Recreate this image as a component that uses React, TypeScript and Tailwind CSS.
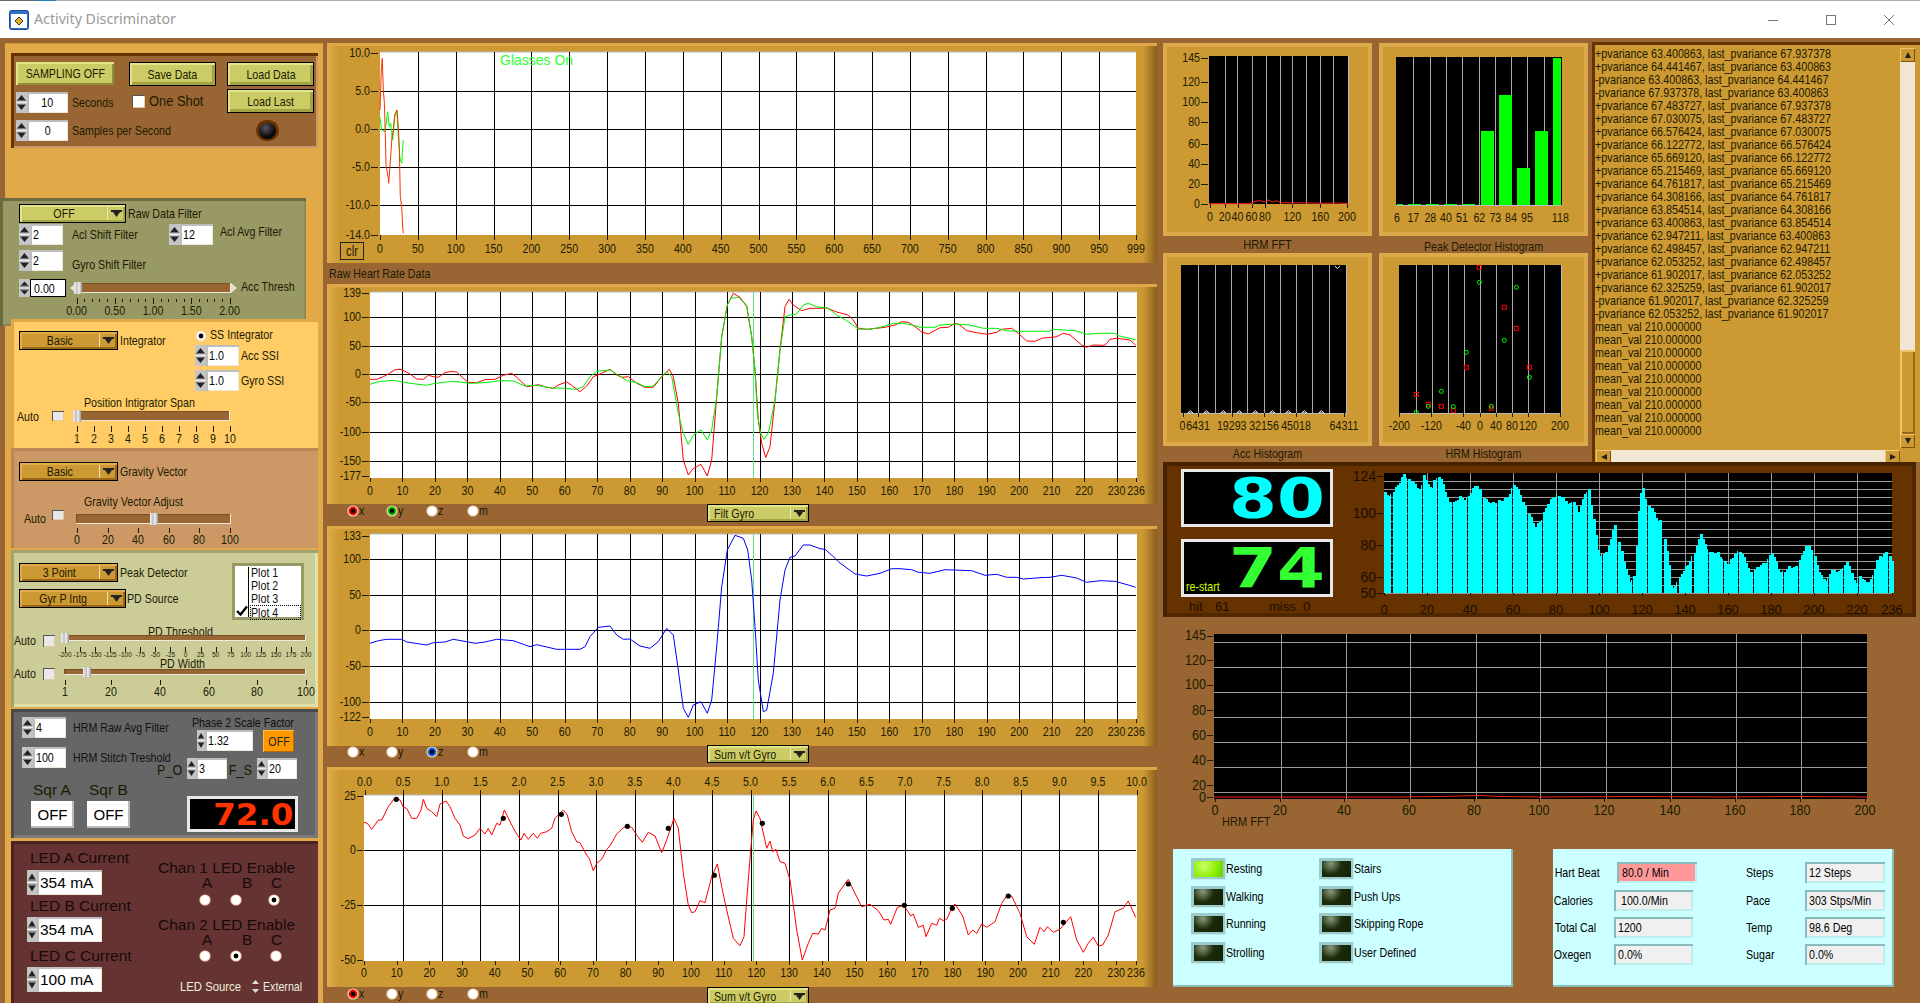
import React from "react";

type P = { className?: string; children?: React.ReactNode };
const INK = "#1c1c00";
const pts = (ox: number, oy: number, a: number[]) => {
  const r: string[] = [];
  for (let i = 0; i < a.length; i += 2) r.push(`${(ox + a[i] / 3).toFixed(1)},${(oy + a[i + 1] / 3).toFixed(1)}`);
  return r.join(" ");
};
const crisp = (n: number) => Math.round(n) + 0.5;

const Txt = ({ className = "", sq = "scale-x-[.82] origin-left", children }: P & { sq?: string }) => <span className={`whitespace-nowrap leading-none text-[13px] text-[#1c1a00] ${sq} ${className}`}>{children}</span>;
const Sq = ({ left = false, children }: { left?: boolean; children?: React.ReactNode }) => <span className={`inline-block whitespace-nowrap scale-x-[.82] ${left ? "origin-left" : "origin-center"}`}>{children}</span>;

const ST = ({ x, y, fs = 13, anchor = "middle", fill = INK, sx = 0.82, children }: { x: number; y: number; fs?: number; anchor?: "start" | "middle" | "end"; fill?: string; sx?: number; children?: React.ReactNode }) => (
  <text transform={`translate(${x} ${y}) scale(${sx} 1)`} fontSize={fs} textAnchor={anchor} dominantBaseline="central" fill={fill}>{children}</text>
);

const Spin = ({ w = 11, tone = "#c4c4c4" }: { w?: number; tone?: string }) => (
  <svg width={w} height="100%" viewBox="0 0 11 21" preserveAspectRatio="none" className="shrink-0 block">
    <rect width="11" height="21" fill={tone} />
    <rect y="10" width="11" height="1" fill="#eee" />
    <polygon points="5.5,3 9.5,8 1.5,8" fill="#222" />
    <polygon points="5.5,18 9.5,13 1.5,13" fill="#222" />
    <rect x="1" y="8" width="9" height="1" fill="#777" />
    <rect x="1" y="12" width="9" height="1" fill="#777" />
  </svg>
);

const Num = ({ className = "", v, spin = 11, text = "text-[13px]", center = false, wide = false, fieldClass = "" }: P & { v: string; spin?: number; text?: string; center?: boolean; wide?: boolean; fieldClass?: string }) => (
  <div className={`flex shrink-0 ${className}`}>
    <Spin w={spin} />
    <div className={`flex-1 min-w-0 flex items-center bg-white shadow-[inset_2px_2px_0_#bdbdbd,inset_-1px_-1px_0_#eee8dc] text-black leading-none ${center ? "justify-center" : "pl-[3px]"} ${text} ${fieldClass}`}>
      {wide ? v : <Sq left={!center}>{v}</Sq>}
    </div>
  </div>
);

const Btn = ({ className = "", children }: P) => (
  <div className={`flex items-center justify-center shrink-0 bg-[#cccc66] text-[13px] text-[#1c1a00] leading-none border border-black shadow-[inset_2px_2px_0_#e4e488,inset_-3px_-3px_0_#a3a344] ${className}`}><Sq>{children}</Sq></div>
);

const Drop = ({ className = "", label, tone = "y", left = false }: P & { label: string; tone?: "y" | "o"; left?: boolean }) => (
  <div className={`flex shrink-0 border border-black text-[13px] leading-none text-[#1c1a00] ${tone === "y" ? "bg-[#cccc66] shadow-[inset_2px_2px_0_#e4e488,inset_-2px_-2px_0_#a3a344]" : "bg-[#cc9933] shadow-[inset_2px_2px_0_#e3ab4b,inset_-2px_-2px_0_#99661a]"} ${className}`}>
    <div className={`flex-1 flex items-center ${left ? "pl-[6px]" : "justify-center"}`}><Sq left={left}>{label}</Sq></div>
    <div className="w-px my-[2px] bg-[#eee8c0]" />
    <div className="w-[17px] flex items-center justify-center">
      <svg width="11" height="7" viewBox="0 0 11 7"><rect width="11" height="2" fill="#222" /><polygon points="2,2 9,2 5.5,7" fill="#222" /></svg>
    </div>
  </div>
);

const Radio = ({ on = false, color = "#ffffff" }: { on?: boolean; color?: string }) => (
  <svg width="12" height="12" viewBox="0 0 12 12" className="shrink-0 block">
    <circle cx="6" cy="6" r="5.6" fill="#f2dcb8" />
    <circle cx="6" cy="6" r="4.4" fill={color} />
    {on && <circle cx="6" cy="6" r="2.4" fill="#000" />}
  </svg>
);

const Check = ({ className = "" }: P) => (
  <div className={`shrink-0 bg-[#e8e8e8] shadow-[inset_1px_1px_0_#555,inset_-1px_-1px_0_#e8c8a0] ${className}`} />
);

const Slider = ({ className = "", thumb = "ml-0", thumbH = "h-[12px] -mt-px" }: P & { thumb?: string; thumbH?: string }) => (
  <div className={`shrink-0 bg-[#996633] shadow-[inset_-1px_-1px_0_#eee8dc,inset_1px_1px_0_#7a4f22] ${className}`}>
    <div className={`w-[8px] bg-[linear-gradient(to_right,#f2f2f2,#bdbdbd_40%,#f2f2f2_60%,#9a9a9a)] ${thumb} ${thumbH}`} />
  </div>
);

const Scale = ({ x0, w, ticks, minor = [], fs = 13, ty = 12, th = 6, h = 20, className = "", color = INK }: { x0: number; w: number; ticks: [number, string][]; minor?: number[]; fs?: number; ty?: number; th?: number; h?: number; className?: string; color?: string }) => (
  <svg width={w} height={h} viewBox={`${x0} 0 ${w} ${h}`} className={`block shrink-0 overflow-visible ${className}`}>
    {minor.map((m) => <line key={m} x1={crisp(m)} x2={crisp(m)} y1="1" y2="4" stroke={color} shapeRendering="crispEdges" />)}
    {ticks.map(([x, t]) => (
      <g key={t}>
        <line x1={crisp(x)} x2={crisp(x)} y1="0" y2={th} stroke={color} shapeRendering="crispEdges" />
        <ST x={x} y={ty + th - 6} fs={fs} fill={color}>{t}</ST>
      </g>
    ))}
  </svg>
);

const Seg = ({ className = "", children }: P) => <span className={`[font-family:'DejaVu_Sans',sans-serif] font-bold origin-right block ${className}`}>{children}</span>;

/* ---------- charts ---------- */
const Grid = ({ xs, ys, x0, x1, y0, y1, color = "#000" }: { xs: number[]; ys: number[]; x0: number; x1: number; y0: number; y1: number; color?: string }) => (
  <g shapeRendering="crispEdges" stroke={color}>
    {xs.map((x, i) => <line key={"v" + i} x1={crisp(x)} x2={crisp(x)} y1={y0} y2={y1} />)}
    {ys.map((y, i) => <line key={"h" + i} x1={x0} x2={x1} y1={crisp(y)} y2={crisp(y)} />)}
  </g>
);
const YAxis = ({ items, x, len = 7, fs = 13, color = INK, sx = 0.82 }: { items: [number, string][]; x: number; len?: number; fs?: number; color?: string; sx?: number }) => (
  <g>
    {items.map(([y, t]) => (
      <g key={t}>
        <line x1={x - len} x2={x} y1={crisp(y)} y2={crisp(y)} stroke={color} shapeRendering="crispEdges" />
        <ST x={x - len - 1} y={y} fs={fs} anchor="end" fill={color} sx={sx}>{t}</ST>
      </g>
    ))}
  </g>
);
const XAxis = ({ items, y, tickY, len = 5, fs = 13, color = INK, sx = 0.82 }: { items: [number, string][]; y: number; tickY: number; len?: number; fs?: number; color?: string; sx?: number }) => (
  <g>
    {items.map(([x, t], i) => (
      <g key={i}>
        <line x1={crisp(x)} x2={crisp(x)} y1={tickY} y2={tickY + len} stroke={color} shapeRendering="crispEdges" />
        <ST x={x} y={y} fs={fs} fill={color} sx={sx}>{t}</ST>
      </g>
    ))}
  </g>
);

const Panel = ({ top, children }: { top: number; children: React.ReactNode }) => (
  <div className="w-[830px] h-[220px] shrink-0 bg-[linear-gradient(to_right,#e3ab4b,#cc9933_12px,#cc9933_816px,#8a5f1f)]">
    <svg width="830" height="220" viewBox={`327 ${top} 830 220`} className="block">
      <rect x="327" y={top} width="830" height="3" fill="#e0a848" />
      {children}
    </svg>
  </div>
);

const range = (a: number, b: number, s: number) => { const r: number[] = []; for (let i = a; i <= b; i += s) r.push(i); return r; };
const X2 = (v: number) => 370 + 3.246 * v;
const X4 = (v: number) => 364 + 3.27 * v;
const x2Ticks: [number, string][] = [...range(0, 230, 10).map((v) => [X2(v), String(v)] as [number, string]), [X2(236), "236"]];
const x2Lines = range(10, 230, 10).map(X2);

const Red2a = [150,1048,170,1048,190,1040,205,1032,225,1019,240,1018,255,1024,270,1032,290,1047,310,1048,325,1036,340,1040,355,1042,375,1028,395,1024,410,1026,430,1045,445,1057,470,1058,495,1049,525,1048,550,1036,575,1030,590,1042,620,1070,655,1064,680,1072,700,1075,715,1065,740,1056,755,1066,780,1085,800,1068,820,1040,845,1030,870,1018,890,1035,905,1042,925,1040,950,1060,975,1072,1000,1072,1025,1040,1048,1018,1060,1040,1075,1120,1090,1290,1105,1335,1118,1317,1143,1303,1162,1338,1175,1290,1190,1100,1205,920,1222,825,1240,790,1260,802,1280,830,1295,920,1305,1020,1315,1170,1325,1240,1337,1283,1350,1250,1365,1110,1380,960,1395,830,1407,808,1420,825,1445,842,1470,835,1500,835];
const Red2b = [140,114,170,126,205,135,220,150,235,175,260,178,290,175,315,172,345,165,365,155,385,157,405,170,425,186,445,192,480,173,505,172,525,160,540,165,560,182,590,188,620,193,650,187,665,178,695,175,715,190,740,213,765,214,785,205,830,200,850,190,870,195,905,225,920,232,940,225,975,226,990,208,1010,205,1050,210,1067,226];
const Grn2a = [150,1063,175,1055,220,1051,270,1060,320,1066,345,1060,400,1054,450,1060,495,1058,540,1052,580,1053,615,1068,650,1066,700,1075,720,1074,770,1078,790,1070,810,1040,830,1024,870,1020,890,1032,920,1052,950,1058,975,1070,1000,1068,1025,1040,1040,1025,1055,1040,1075,1150,1090,1210,1105,1243,1120,1215,1143,1200,1162,1230,1175,1200,1190,1100,1205,920,1222,825,1232,805,1255,802,1280,825,1295,920,1305,1020,1312,1150,1322,1210,1332,1228,1345,1210,1365,1110,1380,960,1395,860,1410,855,1430,852,1450,825,1465,820,1490,830,1500,832];
const Grn2b = [145,115,170,135,200,152,235,177,270,178,300,172,340,160,370,160,400,166,420,172,465,172,480,165,530,162,570,165,610,175,650,175,680,182,715,184,740,184,810,184,820,178,850,180,885,182,920,193,960,190,1005,190,1015,197,1067,209];
const Blu3a = [150,370,175,362,200,358,245,358,260,366,320,375,340,368,375,366,400,358,440,365,465,370,495,366,530,358,580,362,630,380,650,374,710,388,780,388,795,380,810,350,835,322,870,318,890,345,910,358,930,357,960,378,990,385,1015,365,1040,325,1060,345,1075,450,1090,565,1105,592,1120,555,1143,545,1162,580,1175,540,1190,380,1205,200,1222,90,1245,46,1270,55,1283,90,1295,180,1305,320,1315,480,1330,575,1340,570,1360,460,1380,240,1395,150,1410,112,1425,108,1450,75,1470,75,1500,86];
const Blu3b = [135,838,155,855,175,875,225,912,260,918,300,910,335,896,360,896,395,899,415,907,450,910,495,899,575,902,615,916,650,913,680,922,710,922,730,927,780,923,810,922,845,916,890,924,920,937,960,932,1005,934,1045,945,1067,952];
const Red4a = [132,277,142,280,155,298,175,270,185,270,205,230,225,203,240,210,250,232,260,235,275,265,290,265,303,240,310,208,320,235,335,245,350,260,360,222,378,213,390,230,405,265,420,285,430,318,445,326,465,315,480,295,495,312,505,295,515,315,530,280,540,285,553,240,575,285,590,312,603,330,612,310,625,328,640,310,652,325,662,310,680,305,695,295,705,265,730,240,742,255,755,305,770,335,780,338,800,375,808,385,820,422,830,400,845,388,860,358,870,348,890,312,905,298,915,290,935,292,950,315,967,337,985,307,1005,318,1025,368,1040,330,1062,265,1075,295,1090,430,1105,525,1115,548,1125,545,1140,512,1155,518,1175,440,1192,402,1205,470,1220,540,1240,625,1260,647,1272,620,1280,510,1290,385,1300,270,1308,243,1320,265,1340,355,1350,333,1358,365,1368,358,1380,395,1395,400,1410,450,1430,600,1447,690,1465,640,1478,610,1495,612,1500,603];
const Red4b = [125,805,135,810,150,750,165,745,175,700,190,678,205,658,220,690,245,740,270,733,295,752,312,780,325,778,332,793,352,742,372,736,392,768,400,762,415,802,430,796,438,830,455,790,470,796,478,775,490,782,500,778,515,745,525,732,548,768,565,825,578,810,590,820,605,792,620,802,645,785,665,730,680,707,695,708,720,760,740,830,763,853,780,802,792,815,802,800,820,817,840,808,872,770,890,840,910,877,925,850,940,832,955,858,968,855,985,825,1005,755,1030,745,1045,723,1067,772];
const Dots4a = [229,208,550,265,724,253,922,289,1045,295,1183,436,1327,280];
const Dots4b = [205,672,373,736,517,745,685,708,850,787];

const Chart1 = () => {
  const X = (v: number) => 380 + 0.757 * v;
  const ticks: [number, string][] = [...range(0, 950, 50).map((v) => [X(v), String(v)] as [number, string]), [1136, "999"]];
  return (
    <Panel top={43}>
      <rect x="380" y="52" width="756" height="183" fill="#fff" />
      <line x1="380" x2="1136" y1="52" y2="52" stroke="#b8b8c0" />
      <Grid xs={range(50, 950, 50).map(X)} ys={[90.6, 128.6, 166.6, 204.6]} x0={380} x1={1136} y0={52} y1={235} />
      <polyline fill="none" stroke="#00ff00" points={pts(320, 30, [180,262,185,300,195,305,203,245,208,290,212,280,218,330,224,260,230,240,236,340,240,385,245,400,250,330])} />
      <polyline fill="none" stroke="#ff3300" points={pts(320, 30, [180,240,184,120,187,85,190,180,193,215,196,310,198,405,204,440,206,460,209,420,213,365,216,320,220,300,224,255,231,240,235,290,238,350,241,500,245,530,248,590,250,610])} />
      <text x="500" y="60" fontSize="14" fill="#33ff33" dominantBaseline="central">Glasses On</text>
      <YAxis x={378} len={7} items={[[52.6, "10.0"], [90.6, "5.0"], [128.6, "0.0"], [166.6, "-5.0"], [204.6, "-10.0"], [234.6, "-14.0"]]} />
      <XAxis y={249} tickY={235} items={ticks} />
      <rect x="340.5" y="242.5" width="23" height="17" fill="#cc9933" stroke="#222" />
      <ST x={352} y={251} fs={14}>clr</ST>
    </Panel>
  );
};
const Chart2 = () => (
  <Panel top={284}>
    <rect x="370" y="292" width="767" height="186" fill="#fff" />
    <line x1="370" x2="1137" y1="292" y2="292" stroke="#b8b8c0" />
    <Grid xs={x2Lines} ys={[316.6, 345.5, 373.5, 402, 431.5, 460.5]} x0={370} x1={1136} y0={292} y1={478} />
    <line x1="753.5" x2="753.5" y1="292" y2="478" stroke="#66dd88" />
    <polyline fill="none" stroke="#ff0000" points={pts(320, 30, Red2a) + " " + pts(780, 270, Red2b)} />
    <polyline fill="none" stroke="#00ee00" points={pts(320, 30, Grn2a) + " " + pts(780, 270, Grn2b)} />
    <YAxis x={369} items={[[293, "139"], [316.6, "100"], [345.5, "50"], [373.5, "0"], [402, "-50"], [431.5, "-100"], [460.5, "-150"], [476, "-177"]]} />
    <XAxis y={491} tickY={478} len={4} items={x2Ticks} />
  </Panel>
);
const Chart3 = () => (
  <Panel top={526}>
    <rect x="370" y="534" width="767" height="185" fill="#fff" />
    <line x1="370" x2="1137" y1="534" y2="534" stroke="#b8b8c0" />
    <Grid xs={x2Lines} ys={[559, 595, 630, 666, 702]} x0={370} x1={1136} y0={534} y1={719} />
    <line x1="753.5" x2="753.5" y1="534" y2="719" stroke="#66dd88" />
    <polyline fill="none" stroke="#0000ff" points={pts(320, 520, Blu3a) + " " + pts(780, 270, Blu3b)} />
    <YAxis x={369} items={[[535.5, "133"], [559, "100"], [595, "50"], [630, "0"], [666, "-50"], [702, "-100"], [717, "-122"]]} />
    <XAxis y={732} tickY={719} len={4} items={x2Ticks} />
  </Panel>
);
const Chart4 = () => {
  const T = (v: number) => 364.5 + 77.2 * v;
  const top: [number, string][] = range(0, 20, 1).map((i) => [T(i / 2), (i / 2).toFixed(1)] as [number, string]);
  const bot: [number, string][] = [...range(0, 230, 10).map((v) => [X4(v), String(v)] as [number, string]), [1136, "236"]];
  const d: number[][] = [];
  for (let i = 0; i < Dots4a.length; i += 2) d.push([320 + Dots4a[i] / 3, 730 + Dots4a[i + 1] / 3]);
  for (let i = 0; i < Dots4b.length; i += 2) d.push([780 + Dots4b[i] / 3, 660 + Dots4b[i + 1] / 3]);
  return (
    <Panel top={767}>
      <rect x="364" y="795" width="773" height="166" fill="#fff" />
      <line x1="364" x2="1137" y1="795" y2="795" stroke="#b8b8c0" />
      <Grid xs={range(1, 19, 1).map((i) => T(i / 2))} ys={[850, 905]} x0={364} x1={1136} y0={795} y1={961} />
      <line x1="753.5" x2="753.5" y1="795" y2="961" stroke="#66dd88" />
      <polyline fill="none" stroke="#ff0000" points={pts(320, 730, Red4a) + " " + pts(780, 660, Red4b)} />
      {d.map((p, i) => <circle key={i} cx={p[0]} cy={p[1]} r="2.6" fill="#000" />)}
      <YAxis x={363} len={6} items={[[795.7, "25"], [850, "0"], [905, "-25"], [960, "-50"]]} />
      <XAxis y={782} tickY={790} items={top} />
      <XAxis y={973} tickY={961} len={4} items={bot} />
    </Panel>
  );
};

const Legend = ({ active, dropLabel, className = "" }: { active: Record<string, string>; dropLabel: string; className?: string }) => (
  <div className={`flex items-start ${className}`}>
    <div className="ml-[20px] flex">
      {["x", "y", "z", "m"].map((l, i) => (
        <div key={l} className={`flex pt-px ${i === 0 ? "w-[39px]" : i === 1 ? "w-[40px]" : i === 2 ? "w-[41px]" : "w-[40px]"}`}>
          <Radio on={!!active[l]} color={active[l] || "#ffffff"} />
          <Txt className="-mt-px">{l}</Txt>
        </div>
      ))}
    </div>
    <Drop className="ml-[200px] w-[102px] h-[18px]" label={dropLabel} left />
  </div>
);

/* ---------- histogram panels ---------- */
const Hist = ({ x, y, children }: { x: number; y: number; children: React.ReactNode }) => (
  <div className="w-[209px] h-[193px] shrink-0 bg-[#cc9933] shadow-[inset_4px_4px_0_#dcaa4a,inset_-4px_-4px_0_#dcaa4a]">
    <svg width="209" height="193" viewBox={`${x} ${y} 209 193`} className="block">{children}</svg>
  </div>
);
const z5x = (v: number) => 1150 + v / 3;
const z5y = (v: number) => 30 + v / 3;
const HistFFT = () => (
  <Hist x={1163} y={43}>
    <rect x="1209" y="56" width="139" height="148" fill="#000" />
    <line x1="1348.5" x2="1348.5" y1="56" y2="204" stroke="#bbb" />
    <Grid xs={[224, 262, 305, 347, 389, 427, 469, 511, 550].map(z5x)} ys={[]} x0={0} x1={0} y0={56} y1={204} color="#aaaaaa" />
    <polyline fill="none" stroke="#ff2222" points={pts(1150, 30, [178,521,300,521,315,514,330,512,345,516,356,510,368,516,380,512,390,518,485,519,520,520,560,519,595,521])} />
    <YAxis x={1208} len={7} items={[[57.5, "145"], [82, "120"], [102, "100"], [122, "80"], [143.5, "60"], [163.5, "40"], [183.5, "20"], [203.5, "0"]]} />
    <XAxis y={217} tickY={204} len={4} items={[[1210, "0"], [1224.7, "20"], [1237.5, "40"], [1251.5, "60"], [1265, "80"], [1292.3, "120"], [1320.3, "160"], [1347, "200"]]} />
  </Hist>
);
const HistPeak = () => (
  <Hist x={1379} y={43}>
    <rect x="1396" y="57" width="166" height="148" fill="#000" />
    <Grid xs={[790, 841, 889, 937, 988, 1036, 1084, 1132, 1183].map(z5x)} ys={[]} x0={0} x1={0} y0={57} y1={205} color="#aaaaaa" />
    <g fill="#00ff00" shapeRendering="crispEdges">
      <rect x="1481" y="131" width="13" height="74" />
      <rect x="1499" y="95" width="13" height="110" />
      <rect x="1517" y="168" width="13" height="37" />
      <rect x="1535" y="131" width="13" height="74" />
      <rect x="1553" y="58" width="8" height="147" />
      <rect x="1397" y="204" width="6" height="1" />
      <rect x="1408" y="204" width="13" height="1" />
      <rect x="1426" y="204" width="13" height="1" />
      <rect x="1444" y="204" width="13" height="1" />
      <rect x="1462" y="204" width="13" height="1" />
    </g>
    <line x1="1396" x2="1562" y1="205.5" y2="205.5" stroke="#bbb" />
    <XAxis y={218} tickY={205} len={0} items={[[741, "6"], [790, "17"], [841, "28"], [888, "40"], [936, "51"], [988, "62"], [1036, "73"], [1083, "84"], [1131, "95"], [1231, "118"]].map(([a, b]) => [z5x(a as number), b] as [number, string])} />
  </Hist>
);
const HistAcc = () => (
  <Hist x={1163} y={253}>
    <rect x="1181" y="265" width="166" height="148" fill="#000" />
    <Grid xs={[145, 196, 244, 292, 343, 391, 439, 487, 538].map(z5x)} ys={[]} x0={0} x1={0} y0={265} y1={413} color="#aaaaaa" />
    {[121, 169, 220, 268, 316, 367, 415, 463, 514].map((v) => <polygon key={v} points={`${z5x(v) - 2.5},413 ${z5x(v)},410.5 ${z5x(v) + 2.5},413`} fill="none" stroke="#fff" />)}
    <polyline points={`${z5x(562) - 2.5},266 ${z5x(562)},268.5 ${z5x(562) + 2.5},266`} fill="none" stroke="#fff" />
    <line x1="1346.5" x2="1346.5" y1="265" y2="413" stroke="#bbb" />
    <line x1="1181" x2="1347" y1="413.5" y2="413.5" stroke="#bbb" />
    <XAxis y={426} tickY={413} len={4} items={[[1182.5, "0"], [1198, "6431"], [1231.7, "19293"], [1264, "32156"], [1296, "45018"], [1344, "64311"]]} />
  </Hist>
);
const HistHRM = () => {
  const red = [988,712,1063,832,1099,895,949,1012,1138,1012,799,1093,835,1123,874,1129,910,1141,1024,1135];
  const grn = [988,757,1099,772,1063,931,949,967,1138,1042,874,1084,835,1129,910,1130,1024,1129,799,1147];
  const r: React.ReactNode[] = [];
  for (let i = 0; i < red.length; i += 2) r.push(<rect key={i} x={z5x(red[i]) - 2} y={z5y(red[i + 1]) - 2} width="4" height="4" fill="none" stroke="#ff0000" />);
  const g: React.ReactNode[] = [];
  for (let i = 0; i < grn.length; i += 2) g.push(<circle key={i} cx={z5x(grn[i])} cy={z5y(grn[i + 1])} r="2" fill="none" stroke="#00ff00" />);
  return (
    <Hist x={1379} y={253}>
      <rect x="1399" y="265" width="163" height="148" fill="#000" />
      <Grid xs={[799, 847, 895, 943, 991, 1039, 1087, 1135, 1183].map(z5x)} ys={[]} x0={0} x1={0} y0={265} y1={413} color="#aaaaaa" />
      {r}{g}
      <line x1="1399" x2="1562" y1="413.5" y2="413.5" stroke="#bbb" />
      <line x1="1561.5" x2="1561.5" y1="265" y2="413" stroke="#bbb" />
      <XAxis y={426} tickY={413} len={4} items={[[748, "-200"], [844, "-120"], [940, "-40"], [990, "0"], [1038, "40"], [1086, "80"], [1134, "120"], [1230, "200"]].map(([a, b]) => [z5x(a as number), b] as [number, string])} />
    </Hist>
  );
};

const LOG = ["+pvariance 63.400863, last_pvariance 67.937378","+pvariance 64.441467, last_pvariance 63.400863","-pvariance 63.400863, last_pvariance 64.441467","-pvariance 67.937378, last_pvariance 63.400863","+pvariance 67.483727, last_pvariance 67.937378","+pvariance 67.030075, last_pvariance 67.483727","+pvariance 66.576424, last_pvariance 67.030075","+pvariance 66.122772, last_pvariance 66.576424","+pvariance 65.669120, last_pvariance 66.122772","+pvariance 65.215469, last_pvariance 65.669120","+pvariance 64.761817, last_pvariance 65.215469","+pvariance 64.308166, last_pvariance 64.761817","+pvariance 63.854514, last_pvariance 64.308166","+pvariance 63.400863, last_pvariance 63.854514","+pvariance 62.947211, last_pvariance 63.400863","+pvariance 62.498457, last_pvariance 62.947211","+pvariance 62.053252, last_pvariance 62.498457","+pvariance 61.902017, last_pvariance 62.053252","+pvariance 62.325259, last_pvariance 61.902017","-pvariance 61.902017, last_pvariance 62.325259","-pvariance 62.053252, last_pvariance 61.902017","mean_val 210.000000","mean_val 210.000000","mean_val 210.000000","mean_val 210.000000","mean_val 210.000000","mean_val 210.000000","mean_val 210.000000","mean_val 210.000000","mean_val 210.000000"];

const ScrollBtn = ({ dir }: { dir: "u" | "d" | "l" | "r" }) => (
  <div className="w-[15px] h-[14px] shrink-0 flex items-center justify-center bg-[#cc9933] shadow-[inset_1px_1px_0_#eec56a,inset_-1px_-1px_0_#805010]">
    <svg width="8" height="8" viewBox="0 0 8 8">
      <polygon fill="#222" points={dir === "u" ? "4,1 7,7 1,7" : dir === "d" ? "4,7 7,1 1,1" : dir === "l" ? "1,4 7,1 7,7" : "7,4 1,1 1,7"} />
    </svg>
  </div>
);

const Log = () => (
  <div className="w-[328px] h-[420px] shrink-0 bg-[#cc9933] shadow-[inset_3px_3px_0_#663300] flex flex-col">
    <div className="flex h-[408px]">
      <div className="w-[308px] pl-[3px] pt-[5px] text-[13px] leading-[13px] text-[#1c1a00] whitespace-nowrap">
        {LOG.map((l, i) => <div key={i} className="scale-x-[.828] origin-left w-fit">{l}</div>)}
      </div>
      <div className="w-[16px] pt-[6px] flex flex-col">
        <ScrollBtn dir="u" />
        <div className="h-[288px] w-[15px] bg-[#f0e6d2]" />
        <div className="h-[84px] w-[15px] bg-[#cc9933] shadow-[inset_2px_2px_0_#eec56a,inset_-2px_-2px_0_#99661a]" />
        <ScrollBtn dir="d" />
      </div>
    </div>
    <div className="flex h-[12px] ml-[4px] overflow-hidden">
      <ScrollBtn dir="l" />
      <div className="w-[274px] bg-[#f0e6d2]" />
      <ScrollBtn dir="r" />
    </div>
  </div>
);

/* ---------- bar chart ---------- */
const BAR_KEYS = [476,125,485,140,495,120,505,100,515,72,525,92,535,95,540,115,550,112,555,72,565,110,572,112,578,88,586,78,595,105,605,155,615,160,630,140,640,150,650,130,663,100,672,130,685,155,695,160,705,155,720,150,728,135,740,100,750,125,760,170,770,190,782,230,795,210,805,170,815,145,828,133,840,145,850,165,860,150,870,185,885,125,892,120,900,195,908,290,915,320,930,300,940,240,948,220,955,290,965,350,975,395,985,380,992,190,1000,102,1008,160,1018,170,1030,210,1040,215,1048,290,1055,350,1060,425,1068,405,1080,372,1095,340,1105,315,1120,250,1130,290,1140,310,1155,308,1165,330,1175,345,1190,310,1200,303,1210,330,1222,375,1235,350,1250,340,1265,305,1280,365,1290,365,1300,350,1315,352,1335,285,1350,310,1362,372,1375,395,1385,360,1400,365,1420,335,1432,400,1445,380,1458,398,1470,380,1480,325,1495,310,1500,300,1510,335];
const barTop = (zx: number) => {
  for (let i = 0; i < BAR_KEYS.length - 2; i += 2) {
    if (zx <= BAR_KEYS[i + 2]) {
      const t = (zx - BAR_KEYS[i]) / (BAR_KEYS[i + 2] - BAR_KEYS[i]);
      return BAR_KEYS[i + 1] + t * (BAR_KEYS[i + 3] - BAR_KEYS[i + 1]);
    }
  }
  return 335;
};
const BarChart = () => {
  const bars: React.ReactNode[] = [];
  for (let i = 0; i < 237; i++) {
    const x = 1384 + i * 2.15;
    const zx = 476 + i * 4.38;
    const top = 450 + barTop(zx) / 3 + Math.sin(i * 2.1) * 1;
    const x0 = Math.round(x);
    const w = i % 7 === 3 ? 1 : Math.ceil(2.15);
    bars.push(<rect key={i} x={x0} y={Math.min(top, 592)} width={w} height={593 - Math.min(top, 592)} />);
  }
  const hl = range(0, 14, 1).map((i) => 481.3 + i * 8);
  return (
    <svg width="576" height="155" viewBox="1340 462 576 155" className="block shrink-0">
      <rect x="1384" y="473" width="508" height="120" fill="#000" />
      <Grid xs={range(20, 220, 20).map((v) => 1384 + v * 2.15)} ys={hl} x0={1384} x1={1892} y0={473} y1={593} color="#999999" />
      <g fill="#00ffff" shapeRendering="crispEdges">{bars}</g>
      <YAxis x={1383} len={6} fs={14} sx={1} color="#1a0d00" items={[[475.7, "124"], [513, "100"], [545, "80"], [577, "60"], [593, "50"]]} />
      <XAxis y={609} tickY={593} len={3} fs={13} sx={1} color="#1a0d00" items={[...range(0, 220, 20).map((v) => [1384 + v * 2.15, String(v)] as [number, string]), [1892, "236"]]} />
    </svg>
  );
};
const BottomChart = () => (
  <svg width="763" height="232" viewBox="1157 617 763 232" className="block shrink-0">
    <rect x="1214" y="634" width="653" height="165" fill="#000" />
    <Grid xs={[1280.6, 1345.5, 1410, 1475.6, 1540, 1606, 1670.6, 1735.5, 1800.8]} ys={[642, 667, 692, 717, 742, 767, 792]} x0={1214} x1={1867} y0={634} y1={799} color="#9a9a9a" />
    <polyline fill="none" stroke="#ff2222" points="1214,797 1400,797 1440,796.5 1480,795.5 1500,796.5 1540,797 1640,796.5 1720,797 1800,796.5 1867,797" />
    <YAxis x={1213} len={6} fs={14} sx={0.9} items={[[635.5, "145"], [660, "120"], [684.5, "100"], [710, "80"], [735, "60"], [760, "40"], [785, "20"], [797, "0"]]} />
    <XAxis y={810} tickY={799} len={3} fs={14} sx={0.9} items={[[1215, "0"], [1280, "20"], [1344, "40"], [1409, "60"], [1474, "80"], [1539, "100"], [1604, "120"], [1670, "140"], [1735, "160"], [1800, "180"], [1865, "200"]]} />
    <ST x={1222} y={822} anchor="start" sx={0.85}>HRM FFT</ST>
  </svg>
);

const Led = ({ on = false }: { on?: boolean }) => (
  <div className="w-[35px] h-[22px] shrink-0 p-[3px] bg-[#99cccc] shadow-[inset_-1px_-1px_0_#c4eeee]">
    <div className={`w-full h-full ${on ? "bg-[radial-gradient(circle_at_35%_30%,#ccff66,#88ee00_60%,#66cc00)]" : "bg-[radial-gradient(circle_at_30%_15%,#8a9a80,#1c2c0a_45%,#132006)]"}`} />
  </div>
);
const Act = ({ label, on = false }: { label: string; on?: boolean }) => (
  <div className="flex w-[128px] items-center"><Led on={on} /><Txt className="!text-black -mt-[2px]">{label}</Txt></div>
);
const Field = ({ className = "", children }: P) => (
  <div className={`shrink-0 h-[21px] flex items-center text-[13px] leading-none text-black shadow-[inset_2px_2px_0_#88bbbb,inset_-2px_-2px_0_#bfeeee] ${className}`}><Sq left>{children}</Sq></div>
);

export default function App() {
  const tick = (a: number, step: number, labels: string[]) => labels.map((t, i) => [a + i * step, t] as [number, string]);
  const pd = ["-200","-175","-150","-125","-100","-75","-50","-25","0","25","50","75","100","125","150","175","200"];
  return (
    <div className="w-[1920px] h-[1003px] overflow-hidden bg-[#996633] flex flex-col [font-family:'Liberation_Sans',sans-serif]">
      {/* title bar */}
      <div className="h-[38px] shrink-0 bg-white flex flex-col">
        <div className="h-px flex">
          <div className="w-[35px] bg-[#666]" /><div className="w-[21px] bg-[#2b7bb9]" /><div className="flex-1 bg-[#aaaaaa]" />
        </div>
        <div className="flex-1 flex items-center pl-[9px]">
          <svg width="20" height="20" viewBox="0 0 20 20" className="shrink-0">
            <rect x="0.5" y="0.5" width="19" height="19" rx="2" fill="#2f6fc4" stroke="#1c4a8e" />
            <rect x="2" y="4" width="16" height="14" fill="#fff" />
            <polygon points="10,7 14,11 10,15 6,11" fill="#e8b020" stroke="#333" strokeWidth="1" />
          </svg>
          <span className="ml-[5px] text-[14.2px] leading-none text-[#999] [font-family:'Noto_Sans',sans-serif] whitespace-nowrap">Activity Discriminator</span>
          <div className="ml-auto flex items-center text-[#777]">
            <svg width="12" height="12" viewBox="0 0 12 12" className="mr-[46px]"><line x1="1" x2="11" y1="6.5" y2="6.5" stroke="#777" /></svg>
            <svg width="12" height="12" viewBox="0 0 12 12" className="mr-[46px]"><rect x="1.5" y="1.5" width="9" height="9" fill="none" stroke="#777" /></svg>
            <svg width="12" height="12" viewBox="0 0 12 12" className="mr-[25px]"><path d="M1 1 L11 11 M11 1 L1 11" stroke="#777" fill="none" /></svg>
          </div>
        </div>
      </div>

      <div className="flex flex-1 min-h-0">
        {/* LEFT COLUMN */}
        <div className="ml-[5px] w-[318px] shrink-0 mt-[5px] bg-[#e2a948] pt-[10px] shadow-[inset_0_1px_0_#cc9933]">
          {/* acquisition */}
          <div className="ml-[6px] w-[307px] h-[95px] bg-[#996633] shadow-[inset_3px_3px_0_#663300,inset_-2px_-2px_0_#cc9966] pt-[9px] pl-[5px] flex flex-col">
            <div className="flex">
              <div className="w-[98px] h-[23px] flex items-center justify-center shrink-0 bg-[#cccc66] text-[13px] text-[#1c1a00] leading-none shadow-[inset_2px_2px_0_#e4e488,inset_-2px_-2px_0_#8f8f3a]"><Sq>SAMPLING OFF</Sq></div>
              <Btn className="ml-[15px] w-[87px] h-[24px]">Save Data</Btn>
              <Btn className="ml-[11px] w-[87px] h-[24px]">Load Data</Btn>
            </div>
            <div className="flex mt-[3px] h-[24px]">
              <Num className="w-[52px] h-[21px] mt-[3px]" v="10" center fieldClass="text-[#330066]" />
              <Txt className="ml-[4px] w-[60px] mt-[7px]">Seconds</Txt>
              <Check className="w-[13px] h-[13px] mt-[6px] !bg-white" />
              <Txt className="ml-[4px] w-[78px] !text-[14px] mt-[5px]" sq="scale-x-[.92] origin-left">One Shot</Txt>
              <Btn className="w-[87px] h-[24px]">Load Last</Btn>
            </div>
            <div className="flex mt-[7px] h-[21px] items-center">
              <Num className="w-[52px] h-[21px]" v="0" center />
              <Txt className="ml-[4px] w-[184px]">Samples per Second</Txt>
              <div className="w-[23px] h-[21px] rounded-full bg-[#663300] flex items-center justify-center shrink-0">
                <div className="w-[17px] h-[16px] rounded-full bg-[radial-gradient(circle_at_40%_30%,#556,#0a0a0a_60%)]" />
              </div>
            </div>
          </div>

          {/* raw filter panel */}
          <div className="mt-[50px] -ml-[5px] w-[306px] h-[128px] -mb-[7px] bg-[#999966] shadow-[inset_3px_3px_0_#6b6b40,inset_-2px_-2px_0_#8a8a55] pt-[6px] pl-[19px] flex flex-col">
            <div className="flex items-center h-[19px]">
              <Drop className="w-[107px] h-[19px]" label="OFF" />
              <Txt className="ml-[2px]">Raw Data Filter</Txt>
            </div>
            <div className="flex mt-px h-[21px] items-center">
              <Num className="w-[44px] h-[21px]" v="2" />
              <Txt className="ml-[9px] w-[97px]">Acl Shift Filter</Txt>
              <Num className="w-[44px] h-[21px]" v="12" />
              <Txt className="ml-[7px] -mt-[6px]">Acl Avg Filter</Txt>
            </div>
            <div className="flex mt-[5px] h-[21px] items-center">
              <Num className="w-[44px] h-[21px]" v="2" />
              <Txt className="ml-[9px] mt-[8px]">Gyro Shift Filter</Txt>
            </div>
            <div className="flex mt-[8px] h-[18px] items-center">
              <Num className="w-[47px] h-[18px]" v="0.00" spin={11} fieldClass="border border-black !shadow-none" />
              <div className="ml-[4px] w-[6px] h-[10px] flex items-center"><svg width="6" height="10" viewBox="0 0 6 10"><polygon points="6,0 6,10 0,5" fill="#e8e0c8" /></svg></div>
              <Slider className="w-[155px] h-[10px]" thumb="-ml-[2px]" />
              <svg width="6" height="10" viewBox="0 0 6 10" className="shrink-0"><polygon points="0,0 0,10 6,5" fill="#e8e0c8" /></svg>
              <Txt className="ml-[4px] -mt-[4px]">Acc Thresh</Txt>
            </div>
            <Scale x0={0} w={306} className="-ml-[19px] mt-px" h={20} th={6} ty={13} ticks={tick(76.5, 38.25, ["0.00", "0.50", "1.00", "1.50", "2.00"])} minor={range(0, 20, 1).map((i) => 76.5 + i * 7.65)} />
          </div>

          {/* integrator */}
          <div className="relative ml-[6px] w-[307px] h-[129px] bg-[#ffcc66] shadow-[inset_0_3px_0_#e0a848,inset_3px_0_0_#e0a848] pt-[12px] pl-[8px] flex flex-col">
            <div className="flex h-[60px]">
              <div className="w-[176px] flex items-start">
                <Drop className="w-[99px] h-[19px]" tone="o" label="Basic" />
                <Txt className="ml-[2px] h-[19px] flex items-center">Integrator</Txt>
              </div>
              <div className="flex flex-col -mt-[2px]">
                <div className="flex items-center h-[14px]">
                  <Radio on />
                  <Txt className="ml-[3px] -mt-[3px]">SS Integrator</Txt>
                </div>
                <div className="flex items-center mt-[2px]">
                  <Num className="w-[44px] h-[21px]" v="1.0" />
                  <Txt className="ml-[2px]">Acc SSI</Txt>
                </div>
                <div className="flex items-center mt-[4px]">
                  <Num className="w-[44px] h-[21px]" v="1.0" />
                  <Txt className="ml-[2px]">Gyro SSI</Txt>
                </div>
              </div>
            </div>
            <Txt className="mt-[4px] ml-[65px] h-[14px] flex items-center">Position Intigrator Span</Txt>
            <div className="flex mt-[2px] h-[14px]">
              <Txt className="-ml-[2px] w-[35px] -mt-px">Auto</Txt>
              <Check className="w-[12px] h-[10px]" />
              <Slider className="ml-[9px] w-[157px] h-[10px]" />
            </div>
            <Scale x0={11} w={307} className="-ml-[8px] mt-px" th={6} ty={13} ticks={tick(77, 17, ["1","2","3","4","5","6","7","8","9","10"])} />
          </div>

          {/* gravity */}
          <div className="ml-[6px] w-[307px] h-[100px] bg-[#cc9966] shadow-[inset_3px_3px_0_#bb8855] pt-[14px] pl-[8px] flex flex-col">
            <div className="flex items-center h-[19px]">
              <Drop className="w-[99px] h-[19px]" tone="o" label="Basic" />
              <Txt className="ml-[2px]">Gravity Vector</Txt>
            </div>
            <Txt className="mt-[13px] ml-[65px] h-[14px] flex items-center">Gravity Vector Adjust</Txt>
            <div className="flex mt-[2px] h-[14px]">
              <Txt className="ml-[5px] w-[28px] mt-[2px]">Auto</Txt>
              <Check className="w-[12px] h-[10px]" />
              <Slider className="ml-[12px] mt-[4px] w-[155px] h-[10px]" thumb="ml-[74px]" />
            </div>
            <Scale x0={11} w={307} className="-ml-[8px] mt-[4px]" th={5} ty={13} ticks={[[77, "0"], [108, "20"], [138, "40"], [169, "60"], [199, "80"], [230, "100"]]} />
          </div>

          {/* peak */}
          <div className="ml-[6px] mt-[2px] w-[307px] h-[157px] bg-[#cccc99] shadow-[inset_3px_3px_0_#a3a370,inset_-3px_-3px_0_#e0e0aa] pt-[13px] pl-[8px] flex flex-col">
            <div className="flex h-[57px]">
              <div className="w-[213px] flex flex-col">
                <div className="flex items-center h-[19px]">
                  <Drop className="w-[99px] h-[19px]" tone="o" label="3 Point" />
                  <Txt className="ml-[2px]">Peak Detector</Txt>
                </div>
                <div className="flex items-center h-[19px] mt-[7px]">
                  <Drop className="w-[107px] h-[19px]" tone="o" label="Gyr P Intg" />
                  <Txt className="ml-[1px]">PD Source</Txt>
                </div>
              </div>
              <div className="w-[72px] h-[57px] bg-[#999966] p-[3px] flex shrink-0">
                <div className="bg-white flex w-full text-[13px] leading-[13px] text-[#111] pt-px">
                  <div className="w-[14px] border-r border-black flex flex-col justify-end pb-px">
                    <svg width="12" height="11" viewBox="0 0 12 11" className="ml-px"><path d="M1 6 L4.5 9.5 L11 1.5" fill="none" stroke="#000" strokeWidth="2.4" /></svg>
                  </div>
                  <div className="flex-1 pl-[2px] -mt-px flex flex-col">
                    <div><Sq left>Plot 1</Sq></div><div><Sq left>Plot 2</Sq></div><div><Sq left>Plot 3</Sq></div>
                    <div className="border border-dotted border-black -ml-px"><Sq left>Plot 4</Sq></div>
                  </div>
                </div>
              </div>
            </div>
            <Txt className="mt-[5px] ml-[129px] h-[12px] flex items-center">PD Threshold</Txt>
            <div className="flex -mt-[4px] h-[14px] relative">
              <Txt className="-ml-[5px] w-[29px] mt-px">Auto</Txt>
              <Check className="w-[12px] h-[12px] mt-[2px]" />
              <Slider className="ml-[9px] mt-[2px] w-[242px] h-[6px]" thumb="-ml-[3px]" thumbH="h-[10px] -mt-[2px]" />
            </div>
            <Scale x0={11} w={307} className="-ml-[8px]" th={5} ty={8} h={11} fs={8} ticks={pd.map((t, i) => [65 + i * 15.06, t] as [number, string])} />
            <Txt className="-mt-px ml-[141px] h-[12px] flex items-center">PD Width</Txt>
            <div className="flex -mt-px h-[14px] relative">
              <Txt className="-ml-[5px] w-[29px] -mt-px">Auto</Txt>
              <Check className="w-[12px] h-[12px]" />
              <Slider className="ml-[9px] mt-[1px] w-[242px] h-[6px]" thumb="ml-[19px]" thumbH="h-[10px] -mt-[2px]" />
            </div>
            <Scale x0={11} w={307} className="-ml-[8px] -mt-[2px]" th={5} ty={13} ticks={[[65, "1"], [111, "20"], [160, "40"], [209, "60"], [257, "80"], [306, "100"]]} />
          </div>

          {/* hrm */}
          <div className="ml-[6px] mt-[2px] w-[307px] h-[129px] bg-[#666666] shadow-[inset_3px_3px_0_#4a4a4a,inset_-3px_-3px_0_#7a7a7a] pt-[8px] pl-[11px] flex flex-col">
            <div className="flex h-[62px]">
              <div className="w-[170px] flex flex-col">
                <div className="flex items-center">
                  <Num className="w-[44px] h-[21px]" v="4" />
                  <Txt className="ml-[7px] !text-[#111]">HRM Raw Avg Filter</Txt>
                </div>
                <div className="flex items-center mt-[9px]">
                  <Num className="w-[44px] h-[21px]" v="100" />
                  <Txt className="ml-[7px] -mt-px !text-[#111]">HRM Stitch Treshold</Txt>
                </div>
              </div>
              <div className="flex flex-col -mt-[2px]">
                <Txt className="h-[14px] flex items-center !text-[#111]">Phase 2 Scale Factor</Txt>
                <div className="flex ml-[5px] mt-px">
                  <Num className="w-[56px] h-[21px]" v="1.32" spin={8} />
                  <div className="ml-[10px] w-[31px] h-[22px] flex items-center justify-center bg-[#ff9900] text-[13px] leading-none text-[#222] shadow-[inset_1px_1px_0_#ffbb44,inset_-1px_-1px_0_#b86a00]"><Sq>OFF</Sq></div>
                </div>
                <div className="flex items-center mt-[6px] -ml-[35px]">
                  <Txt className="w-[30px] mt-[3px] !text-[14px]" sq="scale-x-[.9] origin-left">P_O</Txt>
                  <Num className="w-[40px] h-[21px]" v="3" spin={9} />
                  <Txt className="w-[30px] pl-[2px] mt-[3px] !text-[14px]" sq="scale-x-[.9] origin-left">F_S</Txt>
                  <Num className="w-[40px] h-[21px]" v="20" spin={9} />
                </div>
              </div>
            </div>
            <div className="flex mt-[4px]">
              <div className="w-[165px] flex pl-[9px]">
                <div className="w-[56px] flex flex-col">
                  <Txt className="h-[14px] pl-[2px] flex items-center !text-[15.5px]" sq="">Sqr A</Txt>
                  <div className="mt-[4px] w-[43px] h-[27px] bg-white flex items-center justify-center text-[15px] leading-none text-black shadow-[inset_-2px_-2px_0_#bbb]">OFF</div>
                </div>
                <div className="flex flex-col">
                  <Txt className="h-[14px] pl-[2px] flex items-center !text-[15.5px]" sq="">Sqr B</Txt>
                  <div className="mt-[4px] w-[43px] h-[27px] bg-white flex items-center justify-center text-[15px] leading-none text-black shadow-[inset_-2px_-2px_0_#bbb]">OFF</div>
                </div>
              </div>
              <div className="mt-[13px] w-[111px] h-[36px] bg-black border-[3px] border-[#e8e8e8] flex items-center justify-end pr-[2px]">
                <Seg className="text-[31px] leading-[28px] text-[#ff3300] scale-x-[1.05]">72.0</Seg>
              </div>
            </div>
          </div>

          {/* led */}
          <div className="ml-[6px] mt-[3px] w-[307px] h-[162px] bg-[#663333] shadow-[inset_3px_3px_0_#4a2222] flex text-[15.5px] leading-none text-[#160a0a]">
            <div className="w-[147px] pl-[16px] pt-[9px] flex flex-col shrink-0">
              <div className="h-[16px] ml-[3px] whitespace-nowrap">LED A Current</div>
              <Num className="w-[75px] h-[25px] mt-[4px]" v="354 mA" spin={10} text="text-[15.5px]" wide />
              <div className="h-[16px] ml-[3px] mt-[3px] whitespace-nowrap">LED B Current</div>
              <Num className="w-[75px] h-[25px] mt-[3px]" v="354 mA" spin={10} text="text-[15.5px]" wide />
              <div className="h-[16px] ml-[3px] mt-[6px] whitespace-nowrap">LED C Current</div>
              <Num className="w-[75px] h-[25px] mt-[3px]" v="100 mA" spin={10} text="text-[15.5px]" wide />
            </div>
            <div className="flex flex-col pt-[19px]">
              <div className="h-[16px] whitespace-nowrap">Chan 1 LED Enable</div>
              <div className="flex h-[16px] -mt-px ml-[44px]"><span className="w-[40px]">A</span><span className="w-[29px]">B</span><span>C</span></div>
              <div className="flex mt-[3px] ml-[41px]"><div className="w-[31px]"><Radio /></div><div className="w-[38px]"><Radio /></div><Radio on /></div>
              <div className="h-[16px] mt-[11px] whitespace-nowrap">Chan 2 LED Enable</div>
              <div className="flex h-[16px] -mt-px ml-[44px]"><span className="w-[40px]">A</span><span className="w-[29px]">B</span><span>C</span></div>
              <div className="flex mt-[2px] ml-[41px]"><div className="w-[31px]"><Radio /></div><div className="w-[40px]"><Radio on /></div><Radio /></div>
              <div className="flex items-center mt-[18px] ml-[22px]">
                <Txt className="w-[72px] !text-[#eeeedd]" sq="scale-x-[.87] origin-left">LED Source</Txt>
                <svg width="7" height="13" viewBox="0 0 7 13" className="shrink-0"><polygon points="3.5,0 7,4 0,4" fill="#ddd" /><polygon points="3.5,13 7,9 0,9" fill="#ddd" /></svg>
                <Txt className="ml-[4px] !text-[#eeeedd]" sq="scale-x-[.82] origin-left">External</Txt>
              </div>
            </div>
          </div>
        </div>

        {/* CENTER COLUMN */}
        <div className="ml-[4px] w-[830px] shrink-0 pt-[5px] flex flex-col">
          <Chart1 />
          <div className="h-[21px] shrink-0 pl-[2px] flex items-center"><Txt>Raw Heart Rate Data</Txt></div>
          <Chart2 />
          <Legend className="h-[22px] shrink-0" active={{ x: "#ff0000", y: "#00cc00" }} dropLabel="Filt Gyro" />
          <Chart3 />
          <Legend className="relative -mt-px h-[22px] shrink-0" active={{ z: "#0066ff" }} dropLabel="Sum v/t Gyro" />
          <Chart4 />
          <Legend className="h-[16px] shrink-0 overflow-hidden" active={{ x: "#ff0000" }} dropLabel="Sum v/t Gyro" />
        </div>

        {/* RIGHT COLUMN */}
        <div className="w-[763px] shrink-0 flex flex-col">
          <div className="flex h-[424px] shrink-0">
            <div className="ml-[6px] w-[425px] pt-[5px] shrink-0">
              <div className="flex gap-[7px]"><HistFFT /><HistPeak /></div>
              <div className="flex gap-[7px] h-[17px]">
                <Txt className="w-[209px] text-center pt-[2px]" sq="scale-x-[.85] origin-center">HRM FFT</Txt>
                <Txt className="w-[209px] text-center pt-[4px]" sq="scale-x-[.82] origin-center">Peak Detector Histogram</Txt>
              </div>
              <div className="flex gap-[7px]"><HistAcc /><HistHRM /></div>
              <div className="flex gap-[7px] h-[17px]">
                <Txt className="w-[209px] text-center pt-px" sq="scale-x-[.82] origin-center">Acc Histogram</Txt>
                <Txt className="w-[209px] text-center pt-px" sq="scale-x-[.82] origin-center">HRM Histogram</Txt>
              </div>
            </div>
            <div className="ml-[4px] pt-[4px]"><Log /></div>
          </div>

          <div className="ml-[6px] w-[753px] h-[155px] shrink-0 bg-[#663300] shadow-[inset_4px_4px_0_#472300,inset_-4px_-4px_0_#4f2700] flex">
            <div className="w-[177px] shrink-0 pl-[18px] pt-[7px] flex flex-col">
              <div className="w-[152px] h-[58px] bg-black border-[3px] border-[#e8e8e8] flex items-center justify-end pr-[5px]">
                <Seg className="text-[56px] leading-[50px] text-[#00ffff] scale-x-[1.23]">80</Seg>
              </div>
              <div className="relative mt-[12px] w-[152px] h-[58px] bg-black border-[3px] border-[#e8e8e8] flex items-center justify-end pr-[5px]">
                <Seg className="text-[56px] leading-[50px] text-[#33ff33] scale-x-[1.23]">74</Seg>
                <span className="absolute left-[2px] bottom-[1px] text-[13px] leading-none text-[#ccff00] scale-x-[.82] origin-left">re-start</span>
              </div>
              <div className="flex mt-[3px] pl-[8px] text-[13px] leading-none text-[#1a0d00]">
                <span className="w-[26px]">hit</span><span className="w-[54px]">61</span><span className="w-[34px]">miss</span><span>0</span>
              </div>
            </div>
            <BarChart />
          </div>

          <BottomChart />

          <div className="flex shrink-0">
            <div className="ml-[16px] w-[340px] h-[138px] bg-[#ccffff] shadow-[inset_-2px_-2px_0_#88bbbb] pt-[9px] pl-[18px] flex flex-col">
              <div className="flex"><Act label="Resting" on /><Act label="Stairs" /></div>
              <div className="flex mt-[6px]"><Act label="Walking" /><Act label="Push Ups" /></div>
              <div className="flex mt-[5px]"><Act label="Running" /><Act label="Skipping Rope" /></div>
              <div className="flex mt-[7px]"><Act label="Strolling" /><Act label="User Defined" /></div>
            </div>
            <div className="ml-[40px] w-[341px] h-[138px] bg-[#ccffff] shadow-[inset_-2px_-2px_0_#88bbbb] pt-[13px] flex flex-col">
              <div className="flex items-center">
                <Txt className="pl-[2px] w-[64px] !text-black">Hart Beat</Txt>
                <Field className="w-[80px] bg-[#ff9999] pl-[5px]">80.0 / Min</Field>
                <Txt className="ml-[49px] w-[59px] !text-black">Steps</Txt>
                <Field className="w-[80px] bg-[#f0f0f0] pl-[4px]">12 Steps</Field>
              </div>
              <div className="flex items-center mt-[7px]">
                <Txt className="pl-[1px] w-[61px] !text-black">Calories</Txt>
                <Field className="w-[79px] bg-[#f0f0f0] pl-[7px]">100.0/Min</Field>
                <Txt className="ml-[53px] w-[59px] !text-black">Pace</Txt>
                <Field className="w-[80px] bg-[#f0f0f0] pl-[4px]">303 Stps/Min</Field>
              </div>
              <div className="flex items-center mt-[6px]">
                <Txt className="pl-[2px] w-[61px] !text-black">Total Cal</Txt>
                <Field className="w-[79px] bg-[#f0f0f0] pl-[4px]">1200</Field>
                <Txt className="ml-[53px] w-[59px] !text-black">Temp</Txt>
                <Field className="w-[80px] bg-[#f0f0f0] pl-[4px]">98.6 Deg</Field>
              </div>
              <div className="flex items-center mt-[6px]">
                <Txt className="pl-[1px] w-[61px] !text-black">Oxegen</Txt>
                <Field className="w-[79px] bg-[#f0f0f0] pl-[4px]">0.0%</Field>
                <Txt className="ml-[53px] w-[59px] !text-black">Sugar</Txt>
                <Field className="w-[80px] bg-[#f0f0f0] pl-[4px]">0.0%</Field>
              </div>
            </div>
          </div>
        </div>
      </div>
    </div>
  );
}
